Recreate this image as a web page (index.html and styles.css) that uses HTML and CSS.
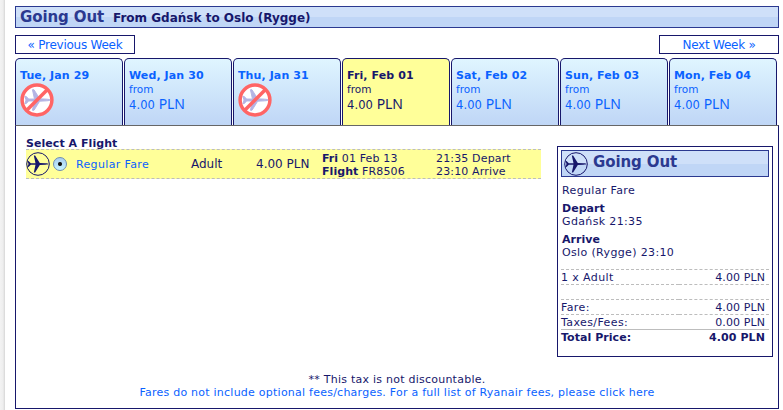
FILE: index.html
```html
<!DOCTYPE html>
<html lang="en">
<head>
<meta charset="utf-8">
<title>Select A Flight</title>
<link rel="stylesheet" href="styles.css">
</head>
<body>
<svg class="defs" aria-hidden="true">
  <symbol id="jet" viewBox="0 0 24 24">
    <path d="M1.500 9h1l2.300 2.200h4.700L7.800 3.500h1.300l4.700 7.500 5.500.3c2 .1 3.200.4 3.200.7s-1.200.6-3.200.7l-5.500.3-4.700 7.500H7.800l1.700-7.700H4.800L2.500 15h-1l1-3z"/>
  </symbol>
  <symbol id="plane" viewBox="0 0 24 24">
    <circle cx="12" cy="12" r="11.300" fill="none" stroke="#17176b" stroke-width="1"/>
    <use href="#jet" fill="#17176b"/>
  </symbol>
  <symbol id="noplane" viewBox="0 0 34 34">
    <circle cx="17" cy="17" r="15" fill="#fff"/>
    <use href="#jet" x="3" y="2.500" width="29" height="29" fill="#b4b4e4" stroke="#b4b4e4" stroke-width=".8"/>
    <circle cx="17" cy="17" r="14.900" fill="none" stroke="#ff6565" stroke-width="3.500"/>
    <path d="M6.500 27.500l21-21" stroke="#ff6565" stroke-width="3.500"/>
  </symbol>
</svg>
<main class="page">
  <header class="heading"><h1>Going Out</h1><h2>From Gdańsk to Oslo (Rygge)</h2></header>
  <nav class="weeks"><a class="prev">« Previous Week</a><a class="next">Next Week »</a></nav>
  <div class="days">
    <div class="day"><b>Tue, Jan 29</b><svg class="none"><use href="#noplane"/></svg></div>
    <div class="day"><b>Wed, Jan 30</b><span class="from">from</span><span class="price">4.00 <i>PLN</i></span></div>
    <div class="day"><b>Thu, Jan 31</b><svg class="none"><use href="#noplane"/></svg></div>
    <div class="day selected"><b>Fri, Feb 01</b><span class="from">from</span><span class="price">4.00 <i>PLN</i></span></div>
    <div class="day"><b>Sat, Feb 02</b><span class="from">from</span><span class="price">4.00 <i>PLN</i></span></div>
    <div class="day"><b>Sun, Feb 03</b><span class="from">from</span><span class="price">4.00 <i>PLN</i></span></div>
    <div class="day"><b>Mon, Feb 04</b><span class="from">from</span><span class="price">4.00 <i>PLN</i></span></div>
  </div>
  <section class="panel">
    <div class="columns">
      <div class="flights">
        <h3>Select A Flight</h3>
        <div class="flight">
          <svg class="icon"><use href="#plane"/></svg>
          <span class="radio"></span>
          <a class="fare">Regular Fare</a>
          <span class="who">Adult</span>
          <span class="amount">4.00 PLN</span>
          <div class="info"><div><b>Fri</b> 01 Feb 13</div><div><b>Flight</b> FR8506</div></div>
          <div class="times"><div>21:35 Depart</div><div>23:10 Arrive</div></div>
        </div>
      </div>
      <aside class="summary">
        <div class="sumhead"><svg class="icon"><use href="#plane"/></svg><h4>Going Out</h4></div>
        <p class="faretype">Regular Fare</p>
        <p><b>Depart</b><br>Gdańsk 21:35</p>
        <p><b>Arrive</b><br>Oslo (Rygge) 23:10</p>
        <div class="lines">
          <div class="line"><span>1 x Adult</span><span class="val">4.00 PLN</span></div>
          <div class="line"><span></span><span class="val"></span></div>
          <div class="line"><span>Fare:</span><span class="val">4.00 PLN</span></div>
          <div class="line"><span>Taxes/Fees:</span><span class="val">0.00 PLN</span></div>
          <div class="line total"><span>Total Price:</span><span class="val">4.00 PLN</span></div>
        </div>
      </aside>
    </div>
    <footer class="notes"><div class="tax">** This tax is not discountable.</div><a>Fares do not include optional fees/charges. For a full list of Ryanair fees, please click here</a></footer>
  </section>
</main>
</body>
</html>
```
FILE: styles.css
```css
* { box-sizing: border-box; }
body {
  margin: 0;
  height: 410px;
  overflow: hidden;
  background: linear-gradient(90deg, #f3f3f3 0, #eee 3px, #d6d6d6 5px, #fff 5px);
  color: #17176b;
  font: 11px/13px "DejaVu Sans", sans-serif;
  letter-spacing: .24px;
}
h1, h2, h3, h4, p { margin: 0; }
a { color: #0a62ff; }
b { letter-spacing: .05px; }
.defs { position: absolute; width: 0; height: 0; }
.page { width: 764px; margin-left: 15px; padding-top: 6px; }
.heading, .sumhead {
  display: flex;
  border: 1px solid #2b3990;
  background: linear-gradient(#cfe0f9 50%, #c0d6f6 50%);
}
.heading { height: 22px; align-items: baseline; padding-left: 4px; }
.heading h1 { width: 93px; font-size: 15px; line-height: 21px; color: #2b3990; letter-spacing: -.1px; white-space: nowrap; }
.heading h2 { font-size: 12px; letter-spacing: 0; }
.weeks { display: flex; justify-content: space-between; margin-top: 7px; }
.weeks a { width: 120px; height: 19px; border: 1px solid #17176b; text-align: center; font-size: 12px; line-height: 18px; letter-spacing: -.25px; }
.days { display: flex; gap: 1px; margin-top: 4px; height: 67px; }
.day {
  display: flex;
  flex-direction: column;
  width: 108px;
  padding: 10px 0 0 4px;
  border: 1px solid #17176b;
  border-bottom: 0;
  border-radius: 5px 5px 0 0;
  background: linear-gradient(#dff5ff, #bfd6f6);
  color: #0a62ff;
  letter-spacing: 0;
}
.day b { line-height: 14px; letter-spacing: .1px; }
.day.selected { background: #ff9; color: #17176b; }
.from { font-size: 10.500px; line-height: 12px; }
.price { font-size: 11.500px; line-height: 18px; letter-spacing: .1px; }
.price i { font: 14px "Noto Sans", sans-serif; line-height: 18px; letter-spacing: -.2px; }
.none { width: 34px; height: 34px; }
.panel { height: 284px; border: 1px solid #17176b; border-top-color: #666; }
.columns { display: flex; justify-content: space-between; height: 231px; padding: 0 5px 0 10px; }
.flights { width: 515px; padding-top: 11px; }
.flights h3 { height: 12px; font-size: 11px; line-height: 13px; letter-spacing: .05px; }
.flight {
  display: grid;
  grid-template-columns: 24px 26px 115px 65px 66px 114px 105px;
  align-items: center;
  height: 30px;
  border: dashed #bdbdbd;
  border-width: 1px 0;
  background: #ff9;
}
.icon { width: 24px; height: 24px; }
.radio {
  width: 14px;
  height: 14px;
  margin-left: 3px;
  border: 1px solid #6d8db3;
  border-radius: 50%;
  background: radial-gradient(circle, #111 0 1.500px, transparent 2.500px), linear-gradient(#a9cdef, #c5f3ff);
}
.fare { letter-spacing: .35px; }
.who, .amount { font-size: 12px; letter-spacing: 0; }
.info, .times { padding-top: 2px; line-height: 13px; letter-spacing: .15px; }
.summary { width: 216px; height: 211px; margin-top: 20px; padding: 3px; border: 1px solid #17176b; }
.sumhead { height: 27px; padding: 1px 0 0 2px; }
.sumhead h4 { margin-left: 5px; font-size: 15px; line-height: 20px; color: #2b3990; letter-spacing: -.1px; }
.summary p { margin: 5px 0 0 1px; letter-spacing: .36px; }
.summary .faretype { margin-top: 7px; }
.lines { margin-top: 10px; letter-spacing: .4px; }
.line { display: flex; height: 15px; }
.line span { flex: 0 0 118px; border-top: 1px dashed #bdbdbd; line-height: 15px; }
.line .val { flex: 1; padding-right: 4px; text-align: right; letter-spacing: .1px; }
.line.total { font-weight: bold; letter-spacing: .05px; }
.line.total span { border-top-style: solid; }
.notes { padding-top: 16px; text-align: center; }
```
